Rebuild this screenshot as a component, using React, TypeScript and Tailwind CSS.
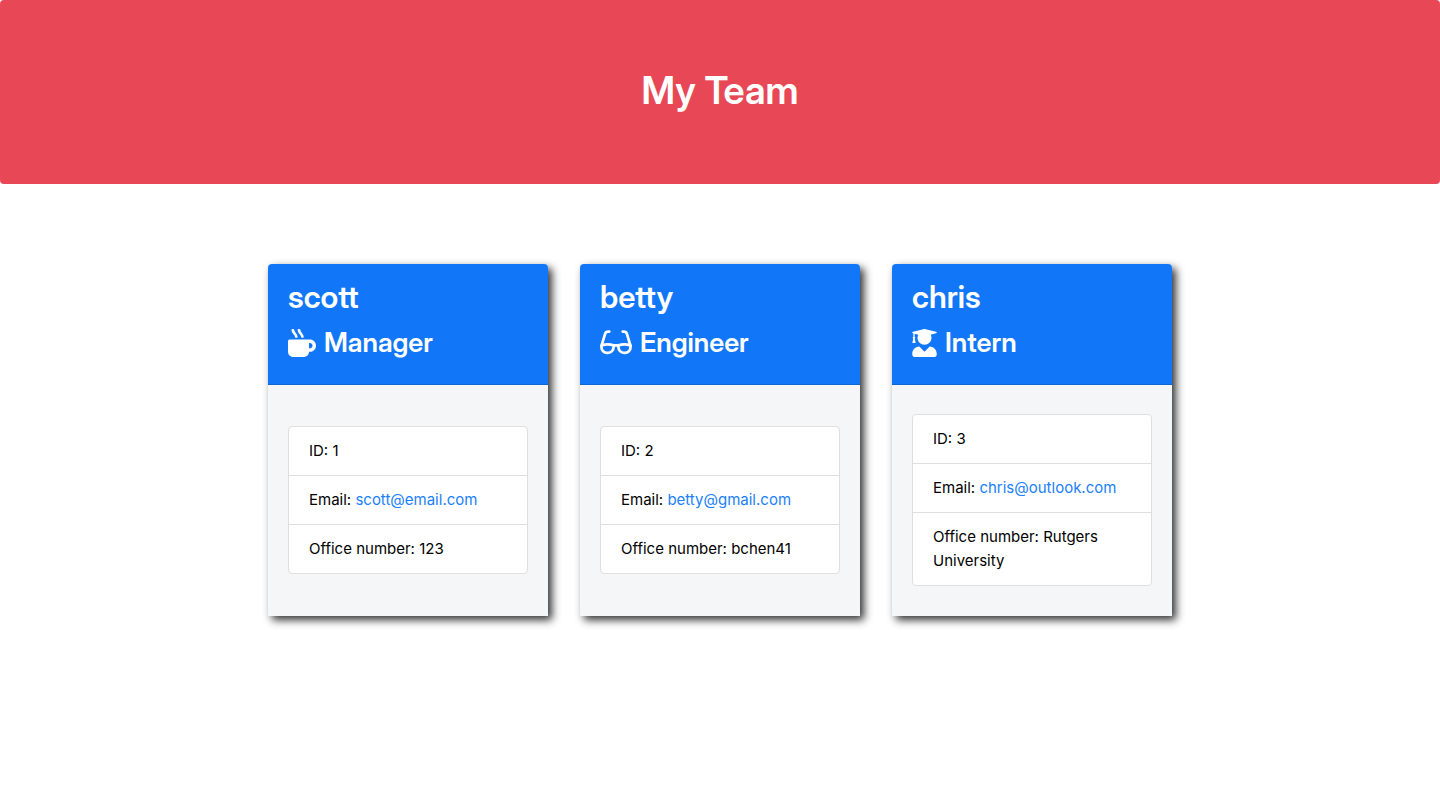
import type { ComponentType, SVGProps } from "react";
import { FaMugHot, FaUserGraduate } from "react-icons/fa";

type Member = {
  name: string;
  role: string;
  icon: ComponentType<SVGProps<SVGSVGElement>>;
  iconSize: string;
  id: number;
  email: string;
  detail: string;
};

function GlassesIcon(props: SVGProps<SVGSVGElement>) {
  return (
    <svg viewBox="0 0 32 28" fill="none" stroke="currentColor" strokeWidth="2.7" strokeLinecap="round" strokeLinejoin="round" {...props}>
      <path d="M9.3 2.6H8.2Q5.8 2.6 5.1 4.9L1.6 16.5" />
      <path d="M22.7 2.6h1.1q2.4 0 3.1 2.3L30.4 16.5" />
      <path d="M1.5 16.6Q7.5 14.3 13.6 16.4V18a5.6 5.9 0 0 1-5.6 5.9H7A5.5 5.5 0 0 1 1.5 18.4Z" />
      <path d="M30.5 16.6Q24.5 14.3 18.4 16.4V18a5.6 5.9 0 0 0 5.6 5.9H25A5.5 5.5 0 0 0 30.5 18.4Z" />
      <path d="M13.6 16.4h4.8" />
    </svg>
  );
}

const team: Member[] = [
  { name: "scott", role: "Manager", icon: FaMugHot, iconSize: "h-7 w-7", id: 1, email: "scott@email.com", detail: "123" },
  { name: "betty", role: "Engineer", icon: GlassesIcon, iconSize: "h-7 w-8", id: 2, email: "betty@gmail.com", detail: "bchen41" },
  { name: "chris", role: "Intern", icon: FaUserGraduate, iconSize: "h-7 w-[25px]", id: 3, email: "chris@outlook.com", detail: "Rutgers University" },
];

function MemberCard({ member }: { member: Member }) {
  const Icon = member.icon;
  return (
    <article className="flex w-[280px] flex-col rounded-t bg-[#f5f6f8] shadow-[4px_4px_8px_#333]">
      <header className="rounded-t border-b border-[#0f66d0] bg-[#1177f8] px-5 pt-3 pb-6 font-['Inter_Display','Inter',sans-serif] font-semibold text-white">
        <h2 className="mb-2 text-[31px] leading-[42px]">{member.name}</h2>
        <h3 className="flex items-center gap-2 text-[27px] leading-[34px]">
          <Icon className={member.iconSize} aria-hidden="true" />
          {member.role}
        </h3>
      </header>
      <div className="flex grow flex-col justify-center px-5 pt-[29px] pb-[30px]">
        <ul className="divide-y divide-[#dfdfdf] rounded border border-[#dfdfdf] bg-white">
          <li className="px-5 py-3">ID: {member.id}</li>
          <li className="px-5 py-3">
            Email:{" "}
            <a className="text-[#1a7ffa]" href={`mailto:${member.email}`}>
              {member.email}
            </a>
          </li>
          <li className="px-5 py-3">{`Office number: ${member.detail}`}</li>
        </ul>
      </div>
    </article>
  );
}

export default function App() {
  return (
    <div className="min-h-screen bg-white font-['Inter',sans-serif] text-[15px] leading-6 text-black">
      <header className="rounded bg-[#e84855] px-8 pt-[66px] pb-[70px]">
        <h1 className="text-center font-['Inter_Display','Inter',sans-serif] text-[38px] leading-12 font-semibold text-white">
          My Team
        </h1>
      </header>
      <main className="flex flex-wrap justify-center gap-8 px-4 py-20">
        {team.map((member) => (
          <MemberCard key={member.id} member={member} />
        ))}
      </main>
    </div>
  );
}
